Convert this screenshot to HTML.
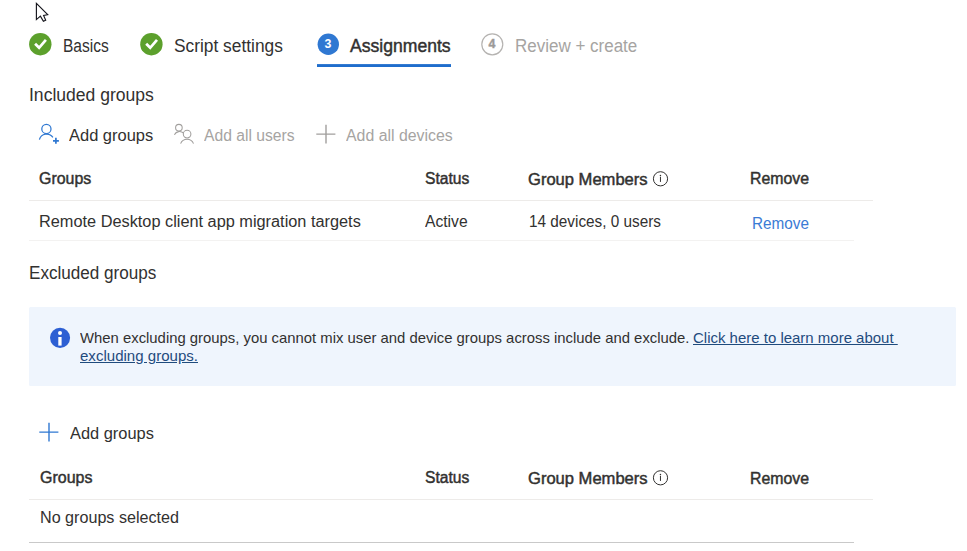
<!DOCTYPE html>
<html><head><meta charset="utf-8"><style>
html,body{margin:0;padding:0;background:#fff;width:967px;height:551px;overflow:hidden;position:relative}
.t{position:absolute;white-space:nowrap;font-family:"Liberation Sans",sans-serif;transform-origin:0 0}
.ln{position:absolute;height:1px}
svg{position:absolute;left:0;top:0}
</style></head><body>
<!-- info box -->
<div style="position:absolute;left:29px;top:307px;width:927px;height:79px;background:#eff5fd;border-radius:1.5px"></div>
<!-- table lines -->
<div class="ln" style="left:29px;top:200px;width:844px;background:#edebe9"></div>
<div class="ln" style="left:29px;top:240px;width:825px;background:#f3f2f1"></div>
<div class="ln" style="left:29px;top:499px;width:844px;background:#edebe9"></div>
<div class="ln" style="left:29px;top:542px;width:825px;background:#c9c9c9"></div>
<div class="t" style="left:63.00px;top:36.76px;font-size:18px;line-height:18px;color:#323130;transform:scaleX(0.8630);">Basics</div>
<div class="t" style="left:173.60px;top:36.76px;font-size:18px;line-height:18px;color:#323130;transform:scaleX(0.9627);">Script settings</div>
<div class="t" style="left:350.40px;top:36.76px;font-size:18px;line-height:18px;color:#323130;-webkit-text-stroke:0.45px #323130;transform:scaleX(0.9763);">Assignments</div>
<div class="t" style="left:515.10px;top:36.76px;font-size:18px;line-height:18px;color:#a6a4a2;transform:scaleX(0.9438);">Review + create</div>
<div class="t" style="left:29.40px;top:85.76px;font-size:18px;line-height:18px;color:#323130;transform:scaleX(0.9743);">Included groups</div>
<div class="t" style="left:29.40px;top:263.76px;font-size:18px;line-height:18px;color:#323130;transform:scaleX(0.9501);">Excluded groups</div>
<div class="t" style="left:69.20px;top:128.45px;font-size:16px;line-height:16px;color:#323130;transform:scaleX(1.0289);">Add groups</div>
<div class="t" style="left:204.20px;top:128.45px;font-size:16px;line-height:16px;color:#a6a4a2;transform:scaleX(0.9797);">Add all users</div>
<div class="t" style="left:346.00px;top:128.45px;font-size:16px;line-height:16px;color:#a6a4a2;transform:scaleX(0.9913);">Add all devices</div>
<div class="t" style="left:70.00px;top:426.45px;font-size:16px;line-height:16px;color:#323130;transform:scaleX(1.0253);">Add groups</div>
<div class="t" style="left:39.40px;top:171.45px;font-size:16px;line-height:16px;color:#323130;-webkit-text-stroke:0.45px #323130;transform:scaleX(0.9950);">Groups</div>
<div class="t" style="left:424.60px;top:171.45px;font-size:16px;line-height:16px;color:#323130;-webkit-text-stroke:0.45px #323130;transform:scaleX(0.9768);">Status</div>
<div class="t" style="left:528.20px;top:172.45px;font-size:16px;line-height:16px;color:#323130;-webkit-text-stroke:0.45px #323130;transform:scaleX(1.0347);">Group Members</div>
<div class="t" style="left:750.10px;top:170.95px;font-size:16px;line-height:16px;color:#323130;-webkit-text-stroke:0.45px #323130;transform:scaleX(0.9909);">Remove</div>
<div class="t" style="left:39.70px;top:470.45px;font-size:16px;line-height:16px;color:#323130;-webkit-text-stroke:0.45px #323130;transform:scaleX(0.9987);">Groups</div>
<div class="t" style="left:424.60px;top:470.45px;font-size:16px;line-height:16px;color:#323130;-webkit-text-stroke:0.45px #323130;transform:scaleX(0.9768);">Status</div>
<div class="t" style="left:528.20px;top:471.45px;font-size:16px;line-height:16px;color:#323130;-webkit-text-stroke:0.45px #323130;transform:scaleX(1.0347);">Group Members</div>
<div class="t" style="left:750.10px;top:470.95px;font-size:16px;line-height:16px;color:#323130;-webkit-text-stroke:0.45px #323130;transform:scaleX(0.9909);">Remove</div>
<div class="t" style="left:39.30px;top:214.45px;font-size:16px;line-height:16px;color:#323130;transform:scaleX(1.0193);">Remote Desktop client app migration targets</div>
<div class="t" style="left:425.00px;top:214.45px;font-size:16px;line-height:16px;color:#323130;transform:scaleX(0.9782);">Active</div>
<div class="t" style="left:528.50px;top:214.15px;font-size:16px;line-height:16px;color:#323130;transform:scaleX(0.9570);">14 devices, 0 users</div>
<div class="t" style="left:751.70px;top:216.15px;font-size:16px;line-height:16px;color:#3a7bd5;transform:scaleX(0.9558);">Remove</div>
<div class="t" style="left:39.50px;top:510.45px;font-size:16px;line-height:16px;color:#323130;transform:scaleX(1.0083);">No groups selected</div>
<div class="t" style="left:80.40px;top:331.47px;font-size:14.8px;line-height:14.8px;color:#323130;transform:scaleX(1.0040);">When excluding groups, you cannot mix user and device groups across include and exclude.</div>
<div class="t" style="left:692.90px;top:331.47px;font-size:14.8px;line-height:14.8px;color:#1f4b7d;transform:scaleX(1.0120);text-decoration:underline;">Click here to learn more about&nbsp;</div>
<div class="t" style="left:79.70px;top:349.47px;font-size:14.8px;line-height:14.8px;color:#1f4b7d;transform:scaleX(1.0173);text-decoration:underline;">excluding groups.</div>
<svg width="967" height="551" viewBox="0 0 967 551">
  <!-- step 1 -->
  <circle cx="40.3" cy="44.2" r="11.2" fill="#5ca02c"/>
  <path d="M35.1 43.7 L39.1 47.8 L45.9 39.8" fill="none" stroke="#fff" stroke-width="2.7" stroke-linejoin="miter"/>
  <!-- step 2 -->
  <circle cx="151.4" cy="44.2" r="11.2" fill="#5ca02c"/>
  <path d="M146.2 43.7 L150.2 47.8 L157 39.8" fill="none" stroke="#fff" stroke-width="2.7" stroke-linejoin="miter"/>
  <!-- step 3 -->
  <circle cx="328.3" cy="44.2" r="10.7" fill="#2f78d2"/>
  <text x="324.6" y="48" font-family="Liberation Sans" font-weight="bold" font-size="12.4" fill="#fff">3</text>
  <rect x="317" y="64.1" width="134" height="2.9" fill="#1f6dcc"/>
  <!-- step 4 -->
  <circle cx="492.3" cy="44.3" r="10.5" fill="none" stroke="#b5b3b1" stroke-width="1.2"/>
  <text x="488.5" y="48" font-family="Liberation Sans" font-weight="bold" font-size="12.4" fill="#9c9a98" stroke="#9c9a98" stroke-width="0.35">4</text>
  <!-- person add -->
  <g fill="none" stroke="#2f78d2" stroke-width="1.25">
    <circle cx="46.4" cy="128.9" r="4.6"/>
    <path d="M39.4 139.6 A7.5 7.5 0 0 1 52.9 137.4"/>
  </g>
  <g stroke="#2f78d2" stroke-width="1.7">
    <path d="M53 140.8 H58.9 M55.9 137.8 V143.7"/>
  </g>
  <!-- people -->
  <g fill="none" stroke="#a19f9d" stroke-width="1.05">
    <circle cx="178.9" cy="127.7" r="3.3"/>
    <path d="M174.4 134.7 A5.8 5.8 0 0 1 183.6 133.2"/>
    <circle cx="187.1" cy="134.1" r="3.8"/>
    <path d="M180.6 143.6 A7 7 0 0 1 193.5 143.6"/>
  </g>
  <!-- plus gray -->
  <path d="M316.3 134.1 H335.4 M326 124.8 V143.6" stroke="#a19f9d" stroke-width="1.4"/>
  <!-- plus blue -->
  <path d="M39.3 432.1 H58.4 M49 422.8 V441.6" stroke="#2f78d2" stroke-width="1.4"/>
  <!-- header info icons -->
  <g fill="none" stroke="#323130" stroke-width="1">
    <circle cx="660.5" cy="178.8" r="7.1"/>
    <circle cx="660.5" cy="477.8" r="7.1"/>
  </g>
  <g fill="#323130">
    <circle cx="660.45" cy="175.4" r="0.75"/><rect x="659.95" y="176.8" width="1" height="5.1"/>
    <circle cx="660.45" cy="474.4" r="0.75"/><rect x="659.95" y="475.8" width="1" height="5.1"/>
  </g>
  <!-- info box icon -->
  <circle cx="60.05" cy="337.85" r="10.05" fill="#2d5fd3"/>
  <circle cx="60" cy="333.1" r="2" fill="#fff"/>
  <rect x="58.3" y="337" width="3.3" height="8.6" fill="#fff"/>
  <!-- cursor -->
  <path d="M36.4 3.4 V19.6 L40.4 16.1 L43.4 21.3 L45.7 20.2 L43.6 15.4 L47.7 14.7 Z" fill="#fff" stroke="#15151c" stroke-width="1.15" stroke-linejoin="miter"/>
</svg>
</body></html>
